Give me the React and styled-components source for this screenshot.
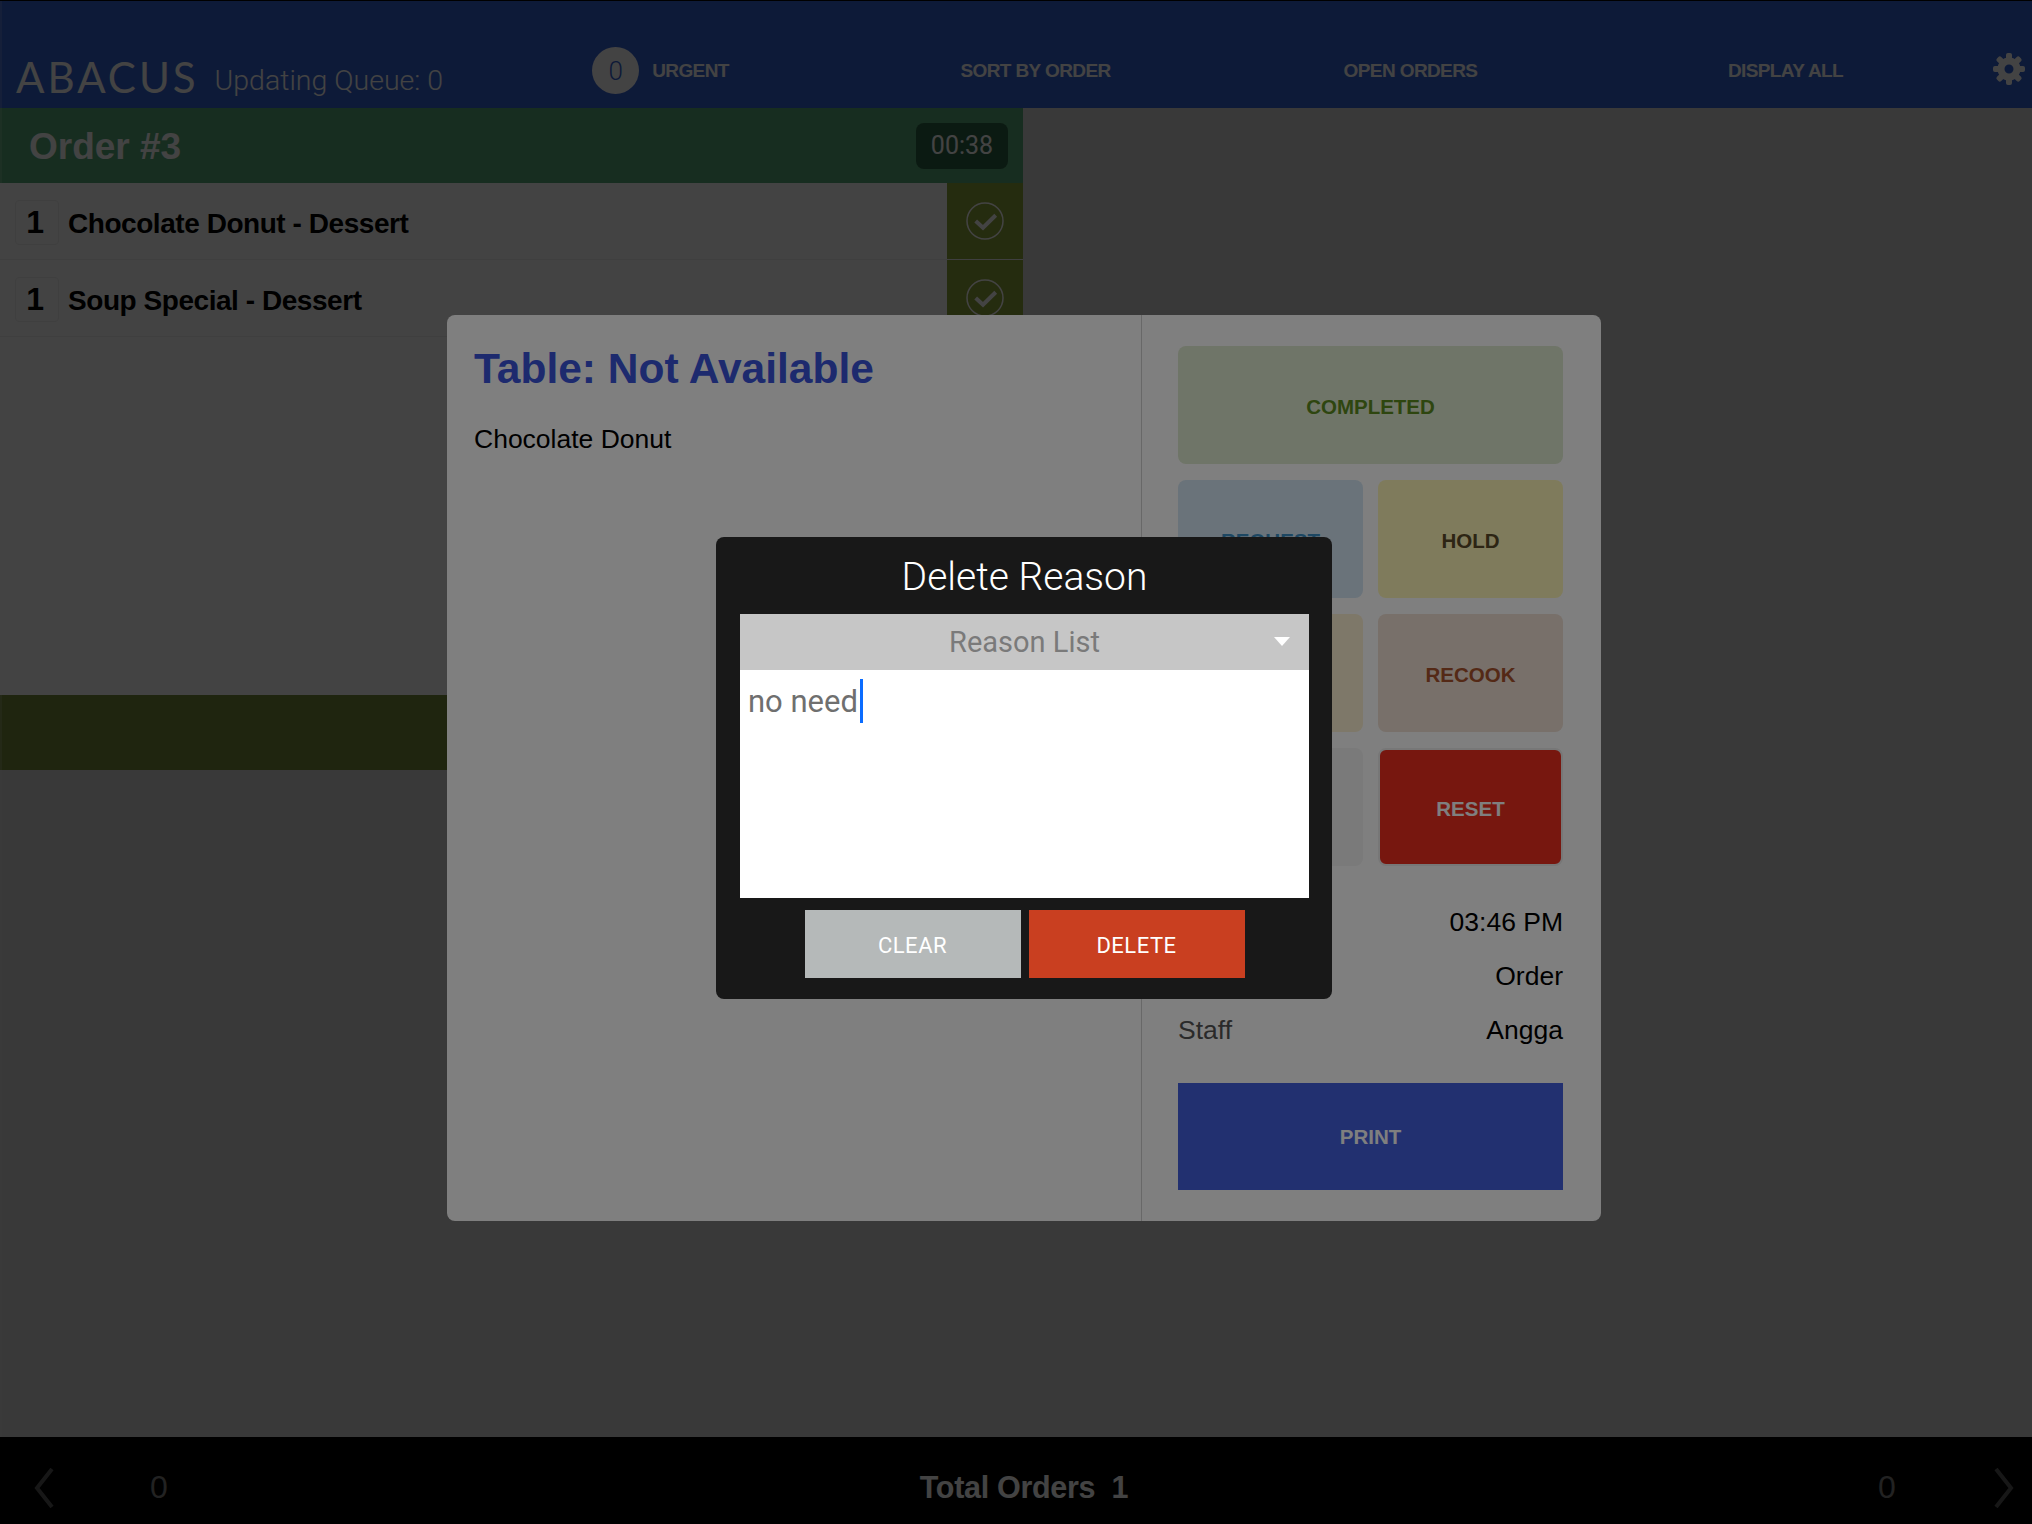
import React from 'react'
import styled, { createGlobalStyle } from 'styled-components'

const GlobalStyle = createGlobalStyle`
  html, body {
    margin: 0;
    padding: 0;
    background: #d7d7d7;
  }
  * {
    box-sizing: border-box;
  }
  body {
    font-family: "Liberation Sans", Arial, sans-serif;
  }
`

const Page = styled.div`
  position: relative;
  width: 2032px;
  height: 1524px;
  overflow: hidden;
  display: flex;
  flex-direction: column;
  background: #d7d7d7;
`

const Header = styled.header`
  height: 108px;
  padding-top: 45px;
  border-top: 1px solid #000;
  background: #3462d4;
  display: flex;
  align-items: flex-start;
`

const Brand = styled.div`
  width: 472px;
  padding: 8px 0 0 16px;
  display: flex;
  align-items: center;
  gap: 16px;
  color: #fff;
`

const Logo = styled.div`
  font-family: Lato, sans-serif;
  font-size: 42px;
  font-weight: 400;
  line-height: 46px;
  letter-spacing: 3px;
`

const Queue = styled.div`
  font-family: Roboto, sans-serif;
  font-size: 28.5px;
  font-weight: 300;
  padding-top: 6px;
  white-space: nowrap;
`

const Nav = styled.nav`
  width: 1500px;
  height: 48px;
  display: grid;
  grid-template-columns: repeat(4, 1fr);
`

const NavItem = styled.div`
  display: flex;
  align-items: center;
  justify-content: center;
  gap: 13px;
  color: #fff;
  font-size: 19px;
  font-weight: 700;
  letter-spacing: -0.6px;
  padding: 1px 0 0 2px;
`

const Badge = styled.span`
  width: 47px;
  height: 47px;
  border-radius: 50%;
  background: #fff;
  color: #3462d4;
  font-family: Roboto, sans-serif;
  font-size: 26px;
  font-weight: 300;
  letter-spacing: 0;
  display: flex;
  align-items: center;
  justify-content: center;
`

const Gear = styled.svg`
  width: 32px;
  height: 32px;
  margin: 7px 0 0 21px;
`

const Board = styled.main`
  flex: 1;
  display: flex;
  align-items: flex-start;
`

const OrderCard = styled.section`
  width: 1023px;
  height: 662px;
  display: flex;
  flex-direction: column;
  background: #fff;
`

const OrderHead = styled.div`
  height: 75px;
  padding: 2px 15px 0 29px;
  display: flex;
  align-items: center;
  justify-content: space-between;
  background: #57aa79;
  color: #fff;
`

const OrderTitle = styled.h2`
  margin: 0;
  font-size: 37px;
  font-weight: 700;
`

const Timer = styled.div`
  width: 92px;
  height: 46px;
  margin-top: -2px;
  border-radius: 8px;
  background: #2d6244;
  display: flex;
  align-items: center;
  justify-content: center;
  font-family: Roboto, sans-serif;
  font-size: 25px;
`

const ItemRow = styled.div`
  height: 77px;
  display: flex;
  align-items: stretch;
  border-bottom: 1px solid #eee;
`

const ItemLabel = styled.div`
  flex: 1;
  padding: 3px 0 0 15px;
  display: flex;
  align-items: center;
  gap: 9px;
  color: #000;
  font-size: 28px;
  font-weight: 700;
  letter-spacing: -0.45px;
`

const ItemName = styled.span`
  padding-top: 3px;
`

const Qty = styled.span`
  width: 44px;
  height: 45px;
  padding-right: 4px;
  border: 1px solid #eee;
  border-radius: 4px;
  display: flex;
  align-items: center;
  justify-content: center;
  font-size: 32px;
`

const CheckCell = styled.div`
  width: 76px;
  background: #8fa63c;
  display: flex;
  align-items: center;
  justify-content: center;
`

const CardSpacer = styled.div`
  flex: 1;
`

const CardFooter = styled.div`
  height: 75px;
  background: #758f3c;
`

const Footer = styled.footer`
  height: 87px;
  padding: 14px 14px 0 30px;
  background: #000;
  display: flex;
  align-items: center;
  font-weight: 700;
`

const Arrow = styled.svg`
  width: 28px;
  height: 40px;
  margin-left: ${p => p.$left || 0}px;
  fill: none;
  stroke: #5a5a5a;
  stroke-width: 4;
`

const PageCount = styled.span`
  width: 20px;
  margin-left: ${p => p.$left}px;
  color: #808080;
  font-size: 32px;
  font-weight: 400;
`

const Total = styled.div`
  flex: 1;
  color: #fff;
  font-size: 30.5px;
  letter-spacing: -0.3px;
  text-align: center;
  white-space: pre;
`

const Overlay = styled.div`
  position: absolute;
  inset: 0;
  background: rgba(0, 0, 0, ${p => p.$alpha});
`

const EdgeLine = styled.div`
  position: absolute;
  left: 0;
  top: 1px;
  bottom: 87px;
  width: 2px;
  background: rgba(255, 255, 255, 0.14);
`

const DetailModal = styled.div`
  position: absolute;
  left: 447px;
  top: 315px;
  width: 1154px;
  height: 906px;
  border-radius: 8px;
  background: #fff;
  display: flex;
`

const DetailMain = styled.div`
  width: 695px;
  padding: 27px 27px;
  border-right: 1px solid #d0d0d0;
`

const TableTitle = styled.h1`
  margin: 0 0 25px;
  color: #3a55dd;
  font-size: 42.5px;
  line-height: 54px;
  font-weight: 700;
`

const DetailItem = styled.div`
  color: #000;
  font-size: 26.5px;
  line-height: 36px;
`

const DetailSide = styled.div`
  flex: 1;
  padding: 31px 38px 0 36px;
`

const ActionGrid = styled.div`
  display: grid;
  grid-template-columns: 185px 185px;
  grid-auto-rows: 118px;
  gap: 16px 15px;
`

const Action = styled.div`
  grid-column: ${p => (p.$wide ? 'span 2' : 'auto')};
  padding-top: 3px;
  border-radius: 8px;
  border: ${p => (p.$framed ? '2px solid #eee' : 'none')};
  background: ${p => p.$bg};
  color: ${p => p.$fg};
  display: flex;
  align-items: center;
  justify-content: center;
  font-size: 20.5px;
  font-weight: 700;
`

const InfoList = styled.div`
  margin-top: 29px;
  display: flex;
  flex-direction: column;
`

const InfoRow = styled.div`
  height: 54px;
  display: flex;
  align-items: center;
  justify-content: space-between;
  font-size: 26.5px;
  color: #000;
`

const InfoLabel = styled.span`
  color: #555;
`

const PrintButton = styled.div`
  height: 107px;
  margin-top: 26px;
  background: #4460e0;
  color: #fff;
  display: flex;
  align-items: center;
  justify-content: center;
  font-size: 20.5px;
  font-weight: 700;
`

const ReasonDialog = styled.div`
  position: absolute;
  left: 716px;
  top: 537px;
  width: 616px;
  height: 462px;
  padding: 0 23px 0 24px;
  border-radius: 8px;
  background: #181818;
  display: flex;
  flex-direction: column;
`

const DialogTitle = styled.h3`
  margin: 0;
  height: 77px;
  padding-top: 3px;
  display: flex;
  align-items: center;
  justify-content: center;
  color: #fff;
  font-family: Roboto, sans-serif;
  font-size: 39px;
  font-weight: 300;
`

const ReasonSelect = styled.div`
  position: relative;
  height: 56px;
  background: #c6c6c6;
  color: #7a7a7a;
  font-family: Roboto, sans-serif;
  font-size: 29px;
  display: flex;
  align-items: center;
  justify-content: center;
`

const SelectArrow = styled.span`
  position: absolute;
  right: 19px;
  top: 23px;
  width: 0;
  height: 0;
  border-left: 8px solid transparent;
  border-right: 8px solid transparent;
  border-top: 9px solid #fff;
`

const ReasonText = styled.div`
  height: 228px;
  padding: 9px 8px;
  background: #fff;
  color: #6f6f6f;
  font-family: Roboto, sans-serif;
  font-size: 31px;
  line-height: 46px;
`

const Caret = styled.span`
  display: inline-block;
  width: 3px;
  height: 44px;
  margin-left: 2px;
  vertical-align: top;
  background: #0a6cff;
`

const DialogButtons = styled.div`
  margin-top: 12px;
  display: flex;
  justify-content: center;
  gap: 8px;
`

const DialogButton = styled.div`
  width: 216px;
  height: 68px;
  padding-top: 2px;
  background: ${p => p.$bg};
  color: #fff;
  font-family: Roboto, sans-serif;
  font-size: 22px;
  letter-spacing: 0.5px;
  display: flex;
  align-items: center;
  justify-content: center;
`

const CheckIcon = () => (
  <svg width="38" height="38" viewBox="0 0 38 38" fill="none" stroke="#fff" strokeWidth="1.5">
    <circle cx="19" cy="19" r="18" />
    <path d="M9.700 19L17 25.700 29.700 13.300" strokeWidth="4" />
  </svg>
)

const GearIcon = () => (
  <Gear viewBox="-16 -16 32 32">
    <circle r="8" fill="none" stroke="#fff" strokeWidth="7" />
    {[0, 45, 90, 135, 180, 225, 270, 315].map(deg => (
      <rect key={deg} x="-3" y="-16" width="6" height="7" rx="2" fill="#fff" transform={`rotate(${deg})`} />
    ))}
  </Gear>
)

const items = ['Chocolate Donut - Dessert', 'Soup Special - Dessert']

const App = () => {
  return (
    <Page>
      <GlobalStyle />
      <Header>
        <Brand>
          <Logo>ABACUS</Logo>
          <Queue>Updating Queue: 0</Queue>
        </Brand>
        <Nav>
          <NavItem><Badge>0</Badge>URGENT</NavItem>
          <NavItem>SORT BY ORDER</NavItem>
          <NavItem>OPEN ORDERS</NavItem>
          <NavItem>DISPLAY ALL</NavItem>
        </Nav>
        <GearIcon />
      </Header>

      <Board>
        <OrderCard>
          <OrderHead>
            <OrderTitle>Order #3</OrderTitle>
            <Timer>00:38</Timer>
          </OrderHead>
          {items.map(item => (
            <ItemRow key={item}>
              <ItemLabel><Qty>1</Qty><ItemName>{item}</ItemName></ItemLabel>
              <CheckCell><CheckIcon /></CheckCell>
            </ItemRow>
          ))}
          <CardSpacer />
          <CardFooter />
        </OrderCard>
      </Board>

      <Footer>
        <Arrow viewBox="0 0 28 40"><path d="M22 1L7 20l15 19" /></Arrow>
        <PageCount $left={92}>0</PageCount>
        <Total>Total Orders  1</Total>
        <PageCount $left={0}>0</PageCount>
        <Arrow viewBox="0 0 28 40" $left={92}><path d="M6 1l15 19L6 39" /></Arrow>
      </Footer>

      <EdgeLine />
      <Overlay $alpha={0.47} />

      <DetailModal>
        <DetailMain>
          <TableTitle>Table: Not Available</TableTitle>
          <DetailItem>Chocolate Donut</DetailItem>
        </DetailMain>
        <DetailSide>
          <ActionGrid>
            <Action $wide $bg="#dfead0" $fg="#5d8c1e">COMPLETED</Action>
            <Action $bg="#d4e6f4" $fg="#3a8fc4">REQUEST</Action>
            <Action $bg="#fff6b8" $fg="#5a4a28">HOLD</Action>
            <Action $bg="#fdf0d2" $fg="#5a4a28" />
            <Action $bg="#f0e0d4" $fg="#a8522c">RECOOK</Action>
            <Action $bg="#f4f4f4" $fg="#777" />
            <Action $framed $bg="#ee2e1e" $fg="#fff">RESET</Action>
          </ActionGrid>
          <InfoList>
            <InfoRow><InfoLabel /><span>03:46 PM</span></InfoRow>
            <InfoRow><InfoLabel /><span>Order</span></InfoRow>
            <InfoRow><InfoLabel>Staff</InfoLabel><span>Angga</span></InfoRow>
          </InfoList>
          <PrintButton>PRINT</PrintButton>
        </DetailSide>
      </DetailModal>

      <Overlay $alpha={0.5} />

      <ReasonDialog>
        <DialogTitle>Delete Reason</DialogTitle>
        <ReasonSelect>
          Reason List
          <SelectArrow />
        </ReasonSelect>
        <ReasonText>no need<Caret /></ReasonText>
        <DialogButtons>
          <DialogButton $bg="#b5b9b9">CLEAR</DialogButton>
          <DialogButton $bg="#c93f20">DELETE</DialogButton>
        </DialogButtons>
      </ReasonDialog>
    </Page>
  )
}

export default App
